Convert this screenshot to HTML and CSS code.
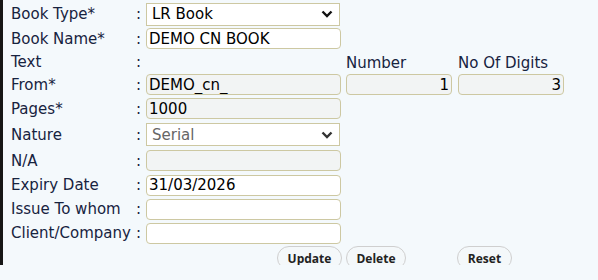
FILE: index.html
```html
<!DOCTYPE html>
<html>

<head>
	<title>Book</title>
	<link rel="stylesheet" href="styles.css">
</head>

<body>
	<div class="container">
		<div class="form-grid">
			<label class="lbl">Book Type*</label>
			<span class="colon">:</span>
			<select class="sel">
				<option>LR Book</option>
			</select>
			<span></span><span></span>

			<label class="lbl">Book Name*</label>
			<span class="colon">:</span>
			<input type="text" class="inp" value="DEMO CN BOOK">
			<span></span><span></span>

			<label class="lbl">Text</label>
			<span class="colon">:</span>
			<span></span>
			<span class="sub-lbl">Number</span>
			<span class="sub-lbl">No Of Digits</span>

			<label class="lbl">From*</label>
			<span class="colon">:</span>
			<input type="text" class="inp readonly" value="DEMO_cn_" readonly>
			<input type="text" class="inp readonly num" value="1" readonly>
			<input type="text" class="inp readonly num" value="3" readonly>

			<label class="lbl">Pages*</label>
			<span class="colon">:</span>
			<input type="text" class="inp readonly" value="1000" readonly>
			<span></span><span></span>

			<label class="lbl">Nature</label>
			<span class="colon">:</span>
			<select class="sel disabled" disabled>
				<option>Serial</option>
			</select>
			<span></span><span></span>

			<label class="lbl">N/A</label>
			<span class="colon">:</span>
			<input type="text" class="inp readonly" readonly>
			<span></span><span></span>

			<label class="lbl">Expiry Date</label>
			<span class="colon">:</span>
			<input type="text" class="inp" value="31/03/2026">
			<span></span><span></span>

			<label class="lbl">Issue To whom</label>
			<span class="colon">:</span>
			<input type="text" class="inp">
			<span></span><span></span>

			<label class="lbl">Client/Company</label>
			<span class="colon">:</span>
			<input type="text" class="inp">
			<span></span><span></span>
		</div>
		<div class="btn-row">
			<button class="btn btn-update">Update</button>
			<button class="btn btn-delete">Delete</button>
			<button class="btn btn-reset">Reset</button>
		</div>
	</div>
</body>

</html>
```

FILE: styles.css
```css
body {
	margin: 0;
	background-color: #f4f9fc;
	font-family: "DejaVu Sans", Verdana, sans-serif;
	color: #17233f;
}

.container {
	width: 595px;
	height: 265px;
	border-left: 3px solid #161616;
	box-sizing: border-box;
	padding: 2px 0 0 8px;
}

.form-grid {
	display: grid;
	grid-template-columns: 123px 12px 200px 112px 106px;
	grid-template-rows: 24px 25px 22px 23px 25px 27px 25px 24px 24px 24px;
	align-items: center;
}

.lbl {
	font-size: 15px;
	white-space: nowrap;
}

.colon {
	font-size: 15px;
	padding-left: 2px;
}

.sub-lbl {
	font-size: 15px;
	align-self: end;
	margin-bottom: 1px;
}

.inp {
	font-family: "DejaVu Sans", Verdana, sans-serif;
	font-size: 15px;
	height: 21px;
	width: 195px;
	box-sizing: border-box;
	border: 1px solid #cdc8a2;
	border-radius: 4px;
	background-color: #fff;
	padding: 0 2px;
	margin: 0;
	color: #000;
}

.readonly {
	background-color: #f2f4f4;
}

.num {
	text-align: right;
	width: 106px;
}

.sel {
	font-family: "DejaVu Sans", Verdana, sans-serif;
	font-size: 15px;
	height: 23px;
	width: 194px;
	box-sizing: border-box;
	border: 1px solid #cdc8a2;
	border-radius: 0;
	background-color: #fff;
	color: #000;
	padding: 0 0 0 5px;
	margin: 0;
	-webkit-appearance: none;
	appearance: none;
	background-image: url("data:image/svg+xml,%3Csvg xmlns='http://www.w3.org/2000/svg' width='12' height='8' viewBox='0 0 12 8'%3E%3Cpath d='M1.5 1.5 L6 6 L10.5 1.5' fill='none' stroke='%23111' stroke-width='2.4'/%3E%3C/svg%3E");
	background-repeat: no-repeat;
	background-position: right 6px center;
}

.disabled {
	color: #666;
	background-color: #fff;
	opacity: 1;
	background-image: url("data:image/svg+xml,%3Csvg xmlns='http://www.w3.org/2000/svg' width='12' height='8' viewBox='0 0 12 8'%3E%3Cpath d='M1.5 1.5 L6 6 L10.5 1.5' fill='none' stroke='%23333' stroke-width='2.4'/%3E%3C/svg%3E");
}

.btn-row {
	display: flex;
	padding-left: 266px;
	margin-top: 1px;
}

.btn {
	font-family: "Open Sans", sans-serif;
	font-weight: bold;
	font-size: 12px;
	color: #222;
	height: 24px;
	background-color: #f4f8fa;
	border: 1px solid #cfcfcf;
	border-radius: 12px;
	padding: 0;
}

.btn-update {
	width: 65px;
}

.btn-delete {
	width: 60px;
	margin-left: 4px;
}

.btn-reset {
	width: 55px;
	margin-left: 51px;
}
```
